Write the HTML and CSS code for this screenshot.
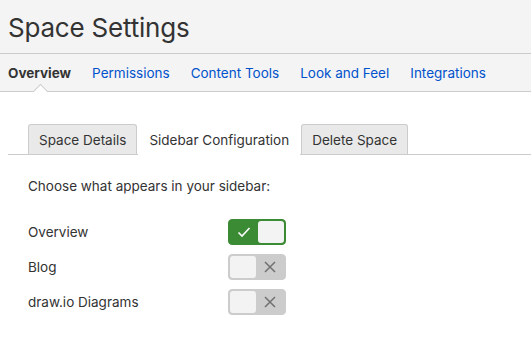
FILE: index.html
```html
<!DOCTYPE html>
<html lang="en">
<head>
    <meta charset="UTF-8">
    <meta name="viewport" content="width=device-width, initial-scale=1.0">
    <title>Space Settings</title>
    <link rel="stylesheet" href="styles.css">
</head>
<body>
    <div class="page-header">
        <h1>Space Settings</h1>
    </div>

    <nav class="main-nav">
        <a class="nav-item active" href="#">Overview</a>
        <a class="nav-item" href="#">Permissions</a>
        <a class="nav-item" href="#">Content Tools</a>
        <a class="nav-item" href="#">Look and Feel</a>
        <a class="nav-item" href="#">Integrations</a>
    </nav>

    <div class="content">
        <div class="tabs">
            <div class="tab">Space Details</div>
            <div class="tab active">Sidebar Configuration</div>
            <div class="tab">Delete Space</div>
        </div>

        <div class="tab-panel">
            <p class="intro">Choose what appears in your sidebar:</p>

            <div class="option-row">
                <span class="option-label">Overview</span>
                <div class="toggle on">
                    <span class="toggle-icon">
                        <svg width="14" height="12" viewBox="0 0 14 12"><path d="M1.5 6.5 L5 10 L12.5 2" fill="none" stroke="#fff" stroke-width="1.6"/></svg>
                    </span>
                    <span class="knob"></span>
                </div>
            </div>

            <div class="option-row">
                <span class="option-label">Blog</span>
                <div class="toggle off">
                    <span class="knob"></span>
                    <span class="toggle-icon">
                        <svg width="14" height="14" viewBox="0 0 14 14"><path d="M2 2 L12 12 M12 2 L2 12" fill="none" stroke="#707070" stroke-width="1.5"/></svg>
                    </span>
                </div>
            </div>

            <div class="option-row">
                <span class="option-label">draw.io Diagrams</span>
                <div class="toggle off">
                    <span class="knob"></span>
                    <span class="toggle-icon">
                        <svg width="14" height="14" viewBox="0 0 14 14"><path d="M2 2 L12 12 M12 2 L2 12" fill="none" stroke="#707070" stroke-width="1.5"/></svg>
                    </span>
                </div>
            </div>
        </div>
    </div>
</body>
</html>
```

FILE: styles.css
```css
body {
    margin: 0;
    font-family: Inter, "Liberation Sans", Arial, sans-serif;
    font-size: 13.5px;
    color: #333;
    background: #fff;
}
.page-header {
    background-color: #f4f4f4;
    border-bottom: 1px solid #ccc;
    height: 54px;
    padding: 0 8px;
    box-sizing: border-box;
}
.page-header h1 {
    margin: 0;
    padding-top: 12px;
    font-size: 26px;
    font-weight: normal;
    line-height: 32px;
    letter-spacing: -0.2px;
    color: #333;
}
.main-nav {
    display: flex;
    gap: 21px;
    height: 38px;
    box-sizing: border-box;
    align-items: center;
    padding: 0 8px;
    background-color: #f4f4f4;
    border-bottom: 1px solid #ccc;
}
.nav-item {
    color: #0052cc;
    text-decoration: none;
    position: relative;
    height: 37px;
    line-height: 39px;
}
.nav-item.active {
    color: #333;
    font-weight: bold;
}
.nav-item.active::after {
    content: "";
    position: absolute;
    left: 50%;
    bottom: -6px;
    width: 10px;
    height: 10px;
    margin-left: -5px;
    background: #fff;
    border-top: 1px solid #ccc;
    border-left: 1px solid #ccc;
    transform: rotate(45deg);
}
.content {
    padding: 32px 0 0 8px;
}
.tabs {
    display: flex;
    gap: 1px;
    padding-left: 20px;
    border-bottom: 1px solid #ccc;
}
.tab {
    height: 29px;
    line-height: 30px;
    padding: 0 10px;
    background: #e9e9e9;
    border: 1px solid #ccc;
    border-bottom: none;
    border-radius: 3px 3px 0 0;
    margin-bottom: -1px;
    color: #333;
}
.tab.active {
    background: #fff;
    border-color: #fff;
    height: 30px;
}
.tab-panel {
    padding: 22px 0 0 20px;
}
.intro {
    margin: 0 0 24px 0;
    line-height: 18px;
}
.option-row {
    display: flex;
    align-items: center;
    height: 26px;
    margin-bottom: 9px;
}
.option-label {
    width: 200px;
}
.toggle {
    width: 58px;
    height: 26px;
    box-sizing: border-box;
    border-radius: 4px;
    display: flex;
    align-items: stretch;
    padding: 1px;
}
.toggle.on {
    background: #3b8a34;
    border: 1px solid #3b8a34;
}
.toggle.off {
    background: #cccccc;
    border: 1px solid #cccccc;
}
.knob {
    width: 26px;
    background: #f3f3f3;
    border-radius: 3px;
}
.toggle-icon {
    flex: 1;
    display: flex;
    align-items: center;
    justify-content: center;
}
```
